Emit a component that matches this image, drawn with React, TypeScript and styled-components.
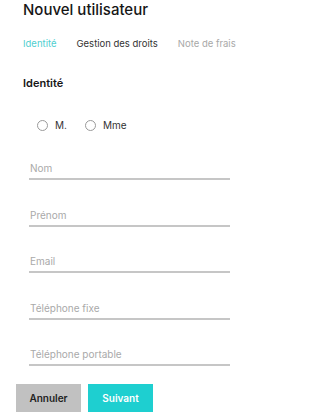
import { FC, useState } from 'react';
import styled, { createGlobalStyle } from 'styled-components';

const GlobalStyle = createGlobalStyle`
  body {
    margin: 0;
    background: #fff;
    font-family: Inter, "Noto Sans", sans-serif;
    -webkit-font-smoothing: antialiased;
  }
`;

const Page = styled.div`
  width: 328px;
  height: 418px;
  box-sizing: border-box;
  display: flex;
  flex-direction: column;
`;

const Title = styled.h1`
  margin: 0;
  padding: 0 0 0 23px;
  font-size: 15px;
  line-height: 20px;
  font-weight: 500;
  color: #161616;
`;

const Tabs = styled.div`
  display: flex;
  gap: 20px;
  margin-top: 18px;
  padding-left: 23px;
`;

const Tab = styled.span<{ $state: 'active' | 'normal' | 'disabled' }>`
  font-size: 9.5px;
  line-height: 12px;
  color: ${(p) => (p.$state === 'active' ? '#4fcfd0' : p.$state === 'disabled' ? '#a8a8a8' : '#333')};
`;

const SectionTitle = styled.h2`
  margin: 26px 0 0;
  padding-left: 23px;
  font-size: 11px;
  line-height: 14px;
  font-weight: 600;
  color: #161616;
`;

const RadioRow = styled.div`
  display: flex;
  align-items: center;
  gap: 18px;
  margin-top: 29px;
  padding-left: 37px;
`;

const RadioLabel = styled.label`
  display: flex;
  align-items: center;
  gap: 7px;
  font-size: 10px;
  color: #333;
  cursor: pointer;
`;

const RadioCircle = styled.span<{ $checked: boolean }>`
  width: 11px;
  height: 11px;
  box-sizing: border-box;
  border-radius: 50%;
  border: 1px solid #9a9a9a;
  background: ${(p) => (p.$checked ? 'radial-gradient(circle, #4fcfd0 40%, #fff 45%)' : '#fff')};
`;

const Fields = styled.div`
  display: flex;
  flex-direction: column;
  gap: 28.5px;
  margin-top: 31px;
  padding-left: 29px;
`;

const Field = styled.input`
  width: 201px;
  height: 18px;
  box-sizing: border-box;
  padding: 0 0 4px 1px;
  border: none;
  border-bottom: 2px solid #c6c6c6;
  outline: none;
  font-family: inherit;
  font-size: 10px;
  color: #333;
  background: transparent;
  &::placeholder {
    color: #a9a9a9;
  }
`;

const Actions = styled.div`
  display: flex;
  gap: 7px;
  margin-top: 18px;
  padding-left: 16px;
`;

const Button = styled.button<{ $primary?: boolean }>`
  width: 65px;
  height: 28px;
  border: none;
  font-family: inherit;
  font-size: 10px;
  font-weight: 600;
  color: ${(p) => (p.$primary ? '#fff' : '#222')};
  background: ${(p) => (p.$primary ? '#1ecfd0' : '#c1c1c1')};
  cursor: pointer;
`;

const fields = ['Nom', 'Prénom', 'Email', 'Téléphone fixe', 'Téléphone portable'];

const App: FC = () => {
  const [civility, setCivility] = useState<string>('');

  return (
    <Page>
      <GlobalStyle />
      <Title>Nouvel utilisateur</Title>
      <Tabs>
        <Tab $state="active">Identité</Tab>
        <Tab $state="normal">Gestion des droits</Tab>
        <Tab $state="disabled">Note de frais</Tab>
      </Tabs>
      <SectionTitle>Identité</SectionTitle>
      <RadioRow>
        {['M.', 'Mme'].map((c) => (
          <RadioLabel key={c} onClick={() => setCivility(c)}>
            <RadioCircle $checked={civility === c} />
            {c}
          </RadioLabel>
        ))}
      </RadioRow>
      <Fields>
        {fields.map((f) => (
          <Field key={f} placeholder={f} />
        ))}
      </Fields>
      <Actions>
        <Button>Annuler</Button>
        <Button $primary>Suivant</Button>
      </Actions>
    </Page>
  );
};

export default App;
